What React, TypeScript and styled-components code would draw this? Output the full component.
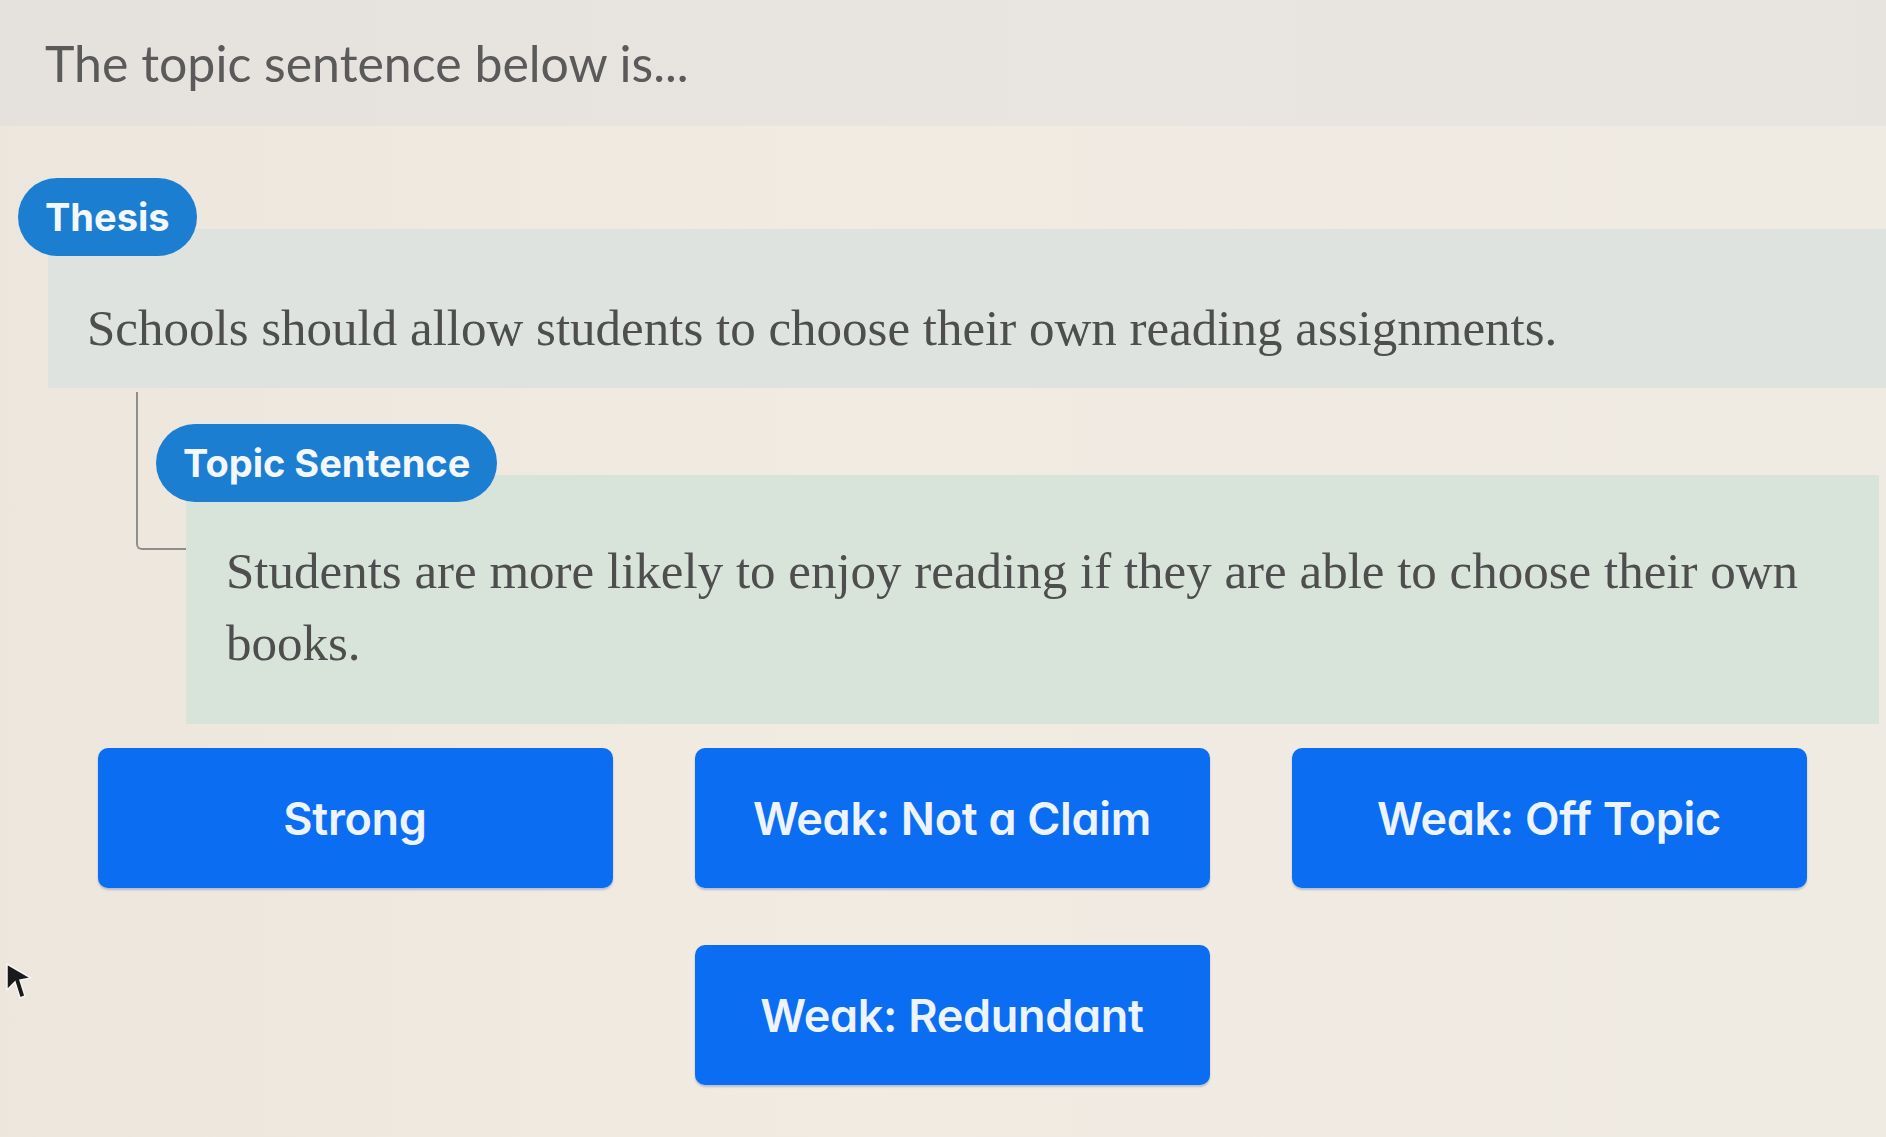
import styled, { createGlobalStyle } from 'styled-components';

const GlobalStyle = createGlobalStyle`
  html, body {
    margin: 0;
    padding: 0;
  }
  body {
    background: #efe9e0;
    font-family: 'Open Sans', sans-serif;
  }
`;

const Page = styled.div`
  position: relative;
  width: 1886px;
  min-height: 1137px;
  overflow: hidden;
  background: linear-gradient(90deg, #ece6dd 0%, #f1ebe2 45%, #efeae2 100%);
`;

const Header = styled.header`
  height: 126px;
  display: flex;
  align-items: center;
  padding-left: 45px;
  background: linear-gradient(90deg, #e5e1dd 0%, #e9e5e1 60%, #e7e3df 100%);
`;

const Title = styled.h1`
  margin: 0;
  font-family: Lato, 'Open Sans', sans-serif;
  font-weight: 400;
  font-size: 50px;
  color: #5a5a5a;
`;

const Content = styled.main`
  padding: 52px 0 0 18px;
`;

const Node = styled.div`
  display: flex;
  flex-direction: column;
  align-items: flex-start;
`;

const Badge = styled.span`
  position: relative;
  z-index: 1;
  height: 78px;
  padding: 0 27px;
  display: flex;
  align-items: center;
  border-radius: 39px;
  background: #1b7ed1;
  color: #f4f8fc;
  font-family: Inter, 'Open Sans', sans-serif;
  font-feature-settings: 'cv11';
  font-weight: 700;
  font-size: 38px;
`;

const Card = styled.div<{ $tone: string; $pad: string }>`
  align-self: stretch;
  margin-left: 30px;
  margin-top: -27px;
  padding: ${(p) => p.$pad};
  background: ${(p) => p.$tone};
`;

const Sentence = styled.p`
  margin: 0;
  font-family: 'Liberation Serif', 'Times New Roman', serif;
  font-size: 51px;
  line-height: 72px;
  color: #4e4e4e;
`;

const Branch = styled.div`
  position: relative;
  margin: 36px 7px 0 118px;
  padding-left: 20px;

  &::before {
    content: '';
    position: absolute;
    left: 0;
    top: -32px;
    width: 48px;
    height: 156px;
    border-left: 2px solid #8e8e8c;
    border-bottom: 2px solid #8e8e8c;
    border-bottom-left-radius: 6px;
  }
`;

const Choices = styled.div`
  display: flex;
  flex-wrap: wrap;
  justify-content: center;
  column-gap: 82px;
  row-gap: 57px;
  margin-top: 24px;
`;

const Choice = styled.button`
  width: 515px;
  height: 140px;
  border: none;
  border-radius: 10px;
  background: #0b6df1;
  box-shadow: 0 2px 2px rgba(20, 60, 140, 0.25);
  color: #eef4ff;
  font-family: Inter, 'Open Sans', sans-serif;
  font-feature-settings: 'cv11';
  font-weight: 600;
  font-size: 45px;
  letter-spacing: -0.3px;
  cursor: pointer;
`;

const Pointer = styled.svg`
  position: absolute;
  left: 5px;
  top: 962px;
  width: 30px;
  height: 40px;
`;

const choices = ['Strong', 'Weak: Not a Claim', 'Weak: Off Topic', 'Weak: Redundant'];

export default function App() {
  return (
    <Page>
      <GlobalStyle />
      <Header>
        <Title>The topic sentence below is...</Title>
      </Header>
      <Content>
        <Node>
          <Badge>Thesis</Badge>
          <Card $tone="#dee3e0" $pad="63px 40px 24px 39px">
            <Sentence>Schools should allow students to choose their own reading assignments.</Sentence>
          </Card>
        </Node>
        <Branch>
          <Node>
            <Badge>Topic Sentence</Badge>
            <Card $tone="#d8e4da" $pad="60px 40px 45px 40px">
              <Sentence>
                Students are more likely to enjoy reading if they are able to choose their own
                <br />
                books.
              </Sentence>
            </Card>
          </Node>
        </Branch>
        <Choices>
          {choices.map((c) => (
            <Choice key={c}>{c}</Choice>
          ))}
        </Choices>
      </Content>
      <Pointer viewBox="0 0 30 40">
        <path d="M2 2 L26 16 L15 18 L20 34 L15 36 L10 20 L2 28 Z" fill="#1a1a1a" stroke="#f5f5f5" strokeWidth="1.5" />
      </Pointer>
    </Page>
  );
}
